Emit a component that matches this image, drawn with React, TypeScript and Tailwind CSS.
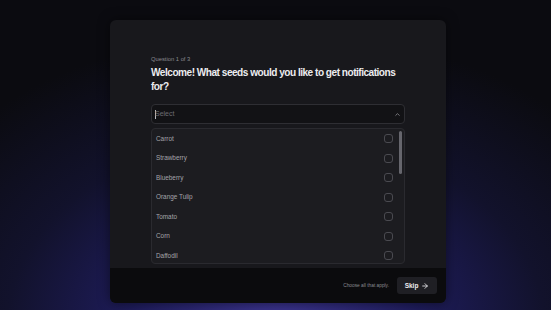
import { ChevronUp, ArrowRight } from 'lucide-react';

const SEEDS = ['Carrot', 'Strawberry', 'Blueberry', 'Orange Tulip', 'Tomato', 'Corn', 'Daffodil'];

export default function App() {
  return (
    <div
      className="w-[551px] h-[310px] overflow-hidden flex justify-center pl-[5px] pt-[20px] bg-[radial-gradient(ellipse_75%_95%_at_50%_105%,#3d3591_0%,#1e1c5a_35%,#12122c_65%,#0b0b10_100%)]"
      style={{ fontFamily: '"Liberation Sans", Arial, sans-serif' }}
    >
      <div className="w-[336px] h-[283px] rounded-[6px] bg-[#18181c] flex flex-col overflow-hidden shadow-[0_0_12px_rgba(0,0,0,0.5)]">
        <div className="flex-1 px-[41px] pt-[35px]">
          <div className="text-[5.8px] leading-[8px] text-[#8a8a90]">Question 1 of 3</div>
          <h1 className="mt-[3px] w-[252px] text-[10.1px] leading-[14px] font-bold tracking-[-0.5px] text-[#ececef]">
            Welcome! What seeds would you like to get notifications for?
          </h1>

          <div className="mt-[10px] h-[20px] rounded-[4px] border border-[#2e2e33] bg-[#121215] flex items-center justify-between pl-[3px] pr-[3px]">
            <div className="flex items-center text-[7px] text-[#6c6c72]">
              <span className="w-px h-[9px] bg-[#b8b8c0] -mr-[1px]" />
              <span>Select</span>
            </div>
            <ChevronUp size={7} strokeWidth={2.5} className="text-[#9a9aa0]" />
          </div>

          <div className="relative mt-[4px] h-[136px] rounded-[4px] border border-[#2a2a2f] bg-[#1c1c20] overflow-hidden">
            {SEEDS.map((s) => (
              <div key={s} className="h-[19.5px] flex items-center justify-between pl-[4px] pr-[11px]">
                <span className="text-[6.4px] text-[#a4a4aa]">{s}</span>
                <span className="w-[9px] h-[9px] rounded-[3px] border border-[#4a4a50]" />
              </div>
            ))}
            <div className="absolute right-[2px] top-[2px] w-[3px] h-[43px] rounded-full bg-[#66666d]" />
          </div>
        </div>

        <div className="h-[35px] bg-[#0b0b0d] flex items-center justify-end gap-[8px] pr-[9px]">
          <span className="text-[4.8px] text-[#8a8a90]">Choose all that apply.</span>
          <button className="w-[40px] h-[17px] rounded-[3px] bg-[#1f1f24] flex items-center justify-center gap-[3px] text-[6.5px] font-bold text-[#ececef]">
            Skip
            <ArrowRight size={8} strokeWidth={2.5} />
          </button>
        </div>
      </div>
    </div>
  );
}
